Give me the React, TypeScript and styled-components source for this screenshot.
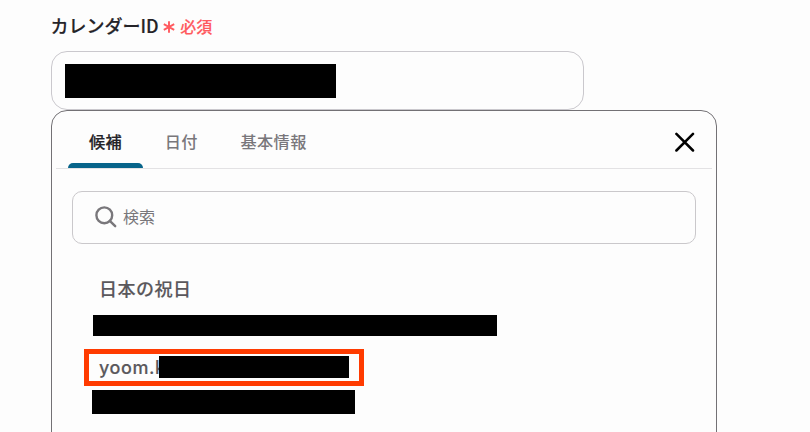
import * as React from "react";
import styled, { createGlobalStyle } from "styled-components";

const TABS = ["候補", "日付", "基本情報"];

const App: React.FC = () => {
    const [active, setActive] = React.useState(0);
    return (
        <>
            <GlobalStyle />
            <Layout>
                <FieldLabel>
                    カレンダーID
                    <Required>
                        <svg width="12" height="12" viewBox="0 0 12 12">
                            <path d="M6 0.3V11.7M0.8 3.2L11.2 8.8M11.2 3.2L0.8 8.8" />
                        </svg>
                        必須
                    </Required>
                </FieldLabel>
                <FieldInput>
                    <Mask $width={271} $height={34} />
                </FieldInput>
                <Panel>
                    <TabBar>
                        {TABS.map((tab, i) => (
                            <Tab
                                key={tab}
                                $active={i === active}
                                onClick={() => setActive(i)}
                            >
                                {tab}
                            </Tab>
                        ))}
                        <CloseButton aria-label="close">
                            <svg width="20" height="20" viewBox="0 0 20 20">
                                <path d="M1.4 1.9L18 18.5M18 1.9L1.4 18.5" />
                            </svg>
                        </CloseButton>
                    </TabBar>
                    <SearchBox>
                        <svg width="22" height="22" viewBox="0 0 22 22">
                            <circle cx="9.3" cy="9.3" r="7.9" />
                            <path d="M14.8 14.8L20.2 20.2" />
                        </svg>
                        <input type="text" placeholder="検索" />
                    </SearchBox>
                    <Options>
                        <OptionTitle>日本の祝日</OptionTitle>
                        <Mask $width={404} $height={21} />
                        <Selected>
                            <span>yoom.k</span>
                            <Mask $width={190} $height={22} />
                        </Selected>
                        <LastMask $width={263} $height={24} />
                    </Options>
                </Panel>
            </Layout>
        </>
    );
};

const GlobalStyle = createGlobalStyle`
    body {
        margin: 0;
        overflow: hidden;
        background: #fdfdfd;
        font-family: "Noto Sans CJK JP", sans-serif;
    }
    * {
        box-sizing: border-box;
    }
`;
const Layout = styled.div`
    height: 432px;
    overflow: hidden;
    padding: 10px 0 0 51px;
`;
const FieldLabel = styled.div`
    display: flex;
    align-items: center;
    height: 30px;
    margin: 0 0 11px -0.5px;
    font-size: 18px;
    font-weight: 500;
    -webkit-text-stroke: 0.15px;
    color: #242328;
`;
const Required = styled.span`
    display: flex;
    align-items: center;
    gap: 5px;
    margin-left: 4.5px;
    padding-top: 1px;
    font-size: 16px;
    color: #ff5a5f;
    svg {
        margin-top: 3px;
        fill: none;
        stroke: #ff5a5f;
        stroke-width: 1.9;
    }
`;
const FieldInput = styled.div`
    width: 533px;
    height: 59px;
    padding: 12px 13px;
    border: 1px solid #cac8cd;
    border-radius: 16px;
`;
const Mask = styled.div<{ $width: number; $height: number }>`
    position: relative;
    flex: none;
    width: ${({ $width }) => $width}px;
    height: ${({ $height }) => $height}px;
    background: #000;
`;
const LastMask = styled(Mask)`
    margin: 4px 0 0 -1px;
`;
const Panel = styled.div`
    width: 666px;
    height: 400px;
    padding: 0 4px;
    border: 1px solid #737175;
    border-radius: 16px;
`;
const TabBar = styled.div`
    display: flex;
    height: 58px;
    padding-left: 12px;
    border-bottom: 1px solid #e3e2e4;
`;
const Tab = styled.button<{ $active: boolean }>`
    position: relative;
    height: 57px;
    padding: 2px 21px 0;
    border: 0;
    background: transparent;
    font-family: inherit;
    font-size: 16.2px;
    font-weight: 500;
    letter-spacing: 0.4px;
    -webkit-text-stroke: ${({ $active }) => ($active ? "0.2px" : "0")};
    color: ${({ $active }) => ($active ? "#242328" : "#79777b")};
    cursor: pointer;
    & + & {
        margin-left: 0.5px;
    }
    &::after {
        content: "";
        display: ${({ $active }) => ($active ? "block" : "none")};
        position: absolute;
        left: 0;
        right: 0;
        bottom: 0;
        height: 5px;
        border-radius: 5px 5px 0 0;
        background: #07648a;
    }
`;
const CloseButton = styled.button`
    display: flex;
    align-self: flex-start;
    margin: 21px 17px 0 auto;
    padding: 0;
    border: 0;
    background: transparent;
    cursor: pointer;
    svg {
        fill: none;
        stroke: #000;
        stroke-width: 2.5;
        stroke-linecap: round;
    }
`;
const SearchBox = styled.div`
    display: flex;
    align-items: center;
    width: 624px;
    height: 53px;
    margin: 22px 0 0 16px;
    padding: 0 23px 0 22px;
    border: 1px solid #cac8cb;
    border-radius: 10px;
    svg {
        margin-top: -2px;
        fill: none;
        stroke: #79777b;
        stroke-width: 2.4;
        stroke-linecap: round;
    }
    input {
        flex: 1;
        height: 30px;
        margin: -3px 0 0 6px;
        padding: 0;
        border: 0;
        outline: 0;
        background: transparent;
        font-family: inherit;
        font-size: 16px;
        &::placeholder {
            color: #79777b;
            opacity: 1;
        }
    }
`;
const Options = styled.div`
    padding: 29px 0 0 37px;
`;
const OptionTitle = styled.div`
    height: 30px;
    margin-bottom: 12px;
    padding-left: 6px;
    line-height: 30px;
    font-size: 18px;
    font-weight: 500;
    letter-spacing: 0.5px;
    -webkit-text-stroke: 0.15px;
    color: #5a585c;
`;
const Selected = styled.div`
    display: flex;
    align-items: flex-start;
    width: 280px;
    height: 37px;
    margin: 13px 0 0 -9px;
    padding: 2px 10px 0;
    border: 5px solid #ff3b00;
    span {
        width: 60px;
        line-height: 24px;
        font-family: Inter, sans-serif;
        font-size: 18px;
        font-weight: 500;
        letter-spacing: 0.55px;
        -webkit-text-stroke: 0.15px;
        color: #5a585c;
    }
`;

export default App;
